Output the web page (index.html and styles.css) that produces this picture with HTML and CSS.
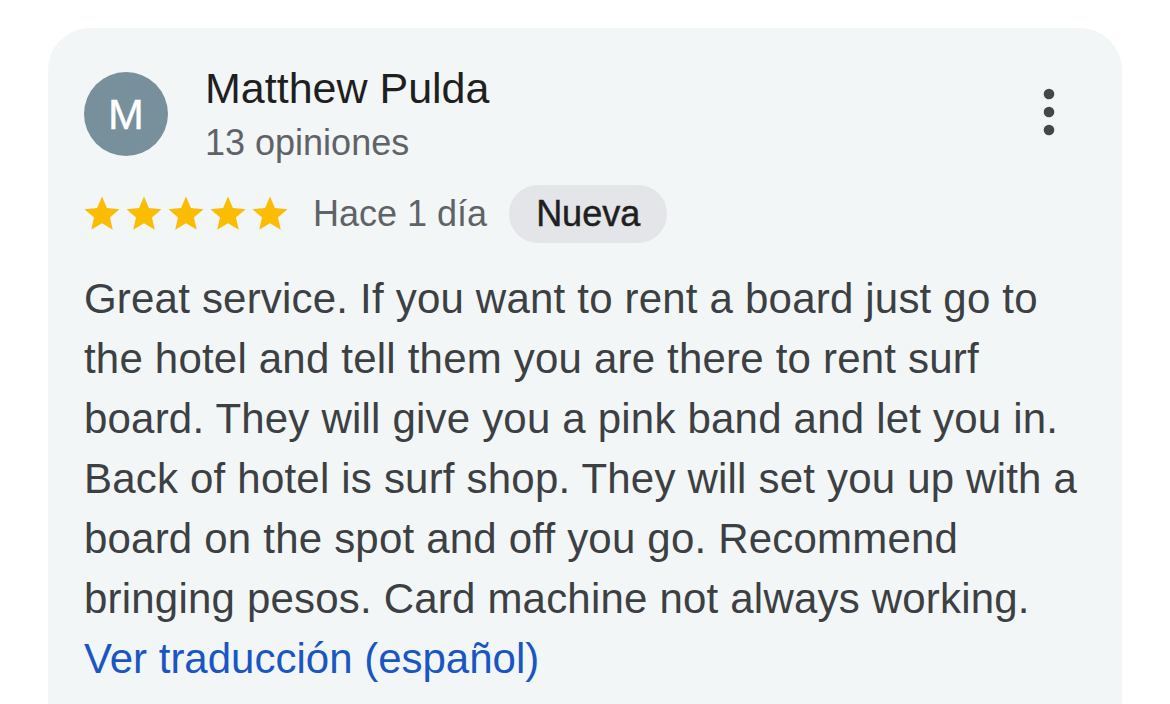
FILE: index.html
```html
<!DOCTYPE html>
<html lang="es">
<head>
<meta charset="utf-8">
<title>Reseña</title>
<link rel="stylesheet" href="styles.css">
</head>
<body>
<div class="card">
  <div class="header">
    <div class="avatar">M</div>
    <div class="who">
      <div class="name">Matthew Pulda</div>
      <div class="count">13 opiniones</div>
    </div>
    <button class="more" aria-label="Más opciones">
      <svg width="12" height="48" viewBox="0 0 12 48"><circle cx="6" cy="6" r="5.3" fill="#444746"/><circle cx="6" cy="24" r="5.3" fill="#444746"/><circle cx="6" cy="42" r="5.3" fill="#444746"/></svg>
    </button>
  </div>
  <div class="meta">
    <div class="stars">
      <svg class="star" viewBox="0 0 24 24"><path d="M12 17.27L18.18 21l-1.64-7.03L22 9.24l-7.19-.61L12 2 9.19 8.63 2 9.24l5.46 4.73L5.82 21z"/></svg>
      <svg class="star" viewBox="0 0 24 24"><path d="M12 17.27L18.18 21l-1.64-7.03L22 9.24l-7.19-.61L12 2 9.19 8.63 2 9.24l5.46 4.73L5.82 21z"/></svg>
      <svg class="star" viewBox="0 0 24 24"><path d="M12 17.27L18.18 21l-1.64-7.03L22 9.24l-7.19-.61L12 2 9.19 8.63 2 9.24l5.46 4.73L5.82 21z"/></svg>
      <svg class="star" viewBox="0 0 24 24"><path d="M12 17.27L18.18 21l-1.64-7.03L22 9.24l-7.19-.61L12 2 9.19 8.63 2 9.24l5.46 4.73L5.82 21z"/></svg>
      <svg class="star" viewBox="0 0 24 24"><path d="M12 17.27L18.18 21l-1.64-7.03L22 9.24l-7.19-.61L12 2 9.19 8.63 2 9.24l5.46 4.73L5.82 21z"/></svg>
    </div>
    <span class="date">Hace 1 día</span>
    <span class="chip">Nueva</span>
  </div>
  <p class="text">Great service. If you want to rent a board just go to the hotel and tell them you are there to rent surf board. They will give you a pink band and let you in. Back of hotel is surf shop. They will set you up with a board on the spot and off you go. Recommend bringing pesos. Card machine not always working.</p>
  <a class="translate" href="#">Ver traducción (español)</a>
</div>
</body>
</html>
```

FILE: styles.css
```css
html, body {
  margin: 0;
  padding: 0;
  background: #ffffff;
  overflow: hidden;
  height: 100%;
}

body {
  font-family: "Liberation Sans", Arial, sans-serif;
  padding: 28px 48px 0 48px;
  box-sizing: border-box;
}

.card {
  width: 1074px;
  min-height: 720px;
  box-sizing: border-box;
  background: #f2f6f7;
  border-radius: 42px 42px 0 0;
  padding: 35px 36px 40px 36px;
}

.header {
  display: flex;
  align-items: center;
  height: 102px;
}

.avatar {
  width: 84px;
  height: 84px;
  border-radius: 50%;
  background: #78909c;
  color: #ffffff;
  font-size: 43px;
  line-height: 84px;
  text-align: center;
  flex: none;
  -webkit-text-stroke: 0.4px #ffffff;
}

.who {
  flex: 1;
  margin-left: 37px;
  display: flex;
  flex-direction: column;
  gap: 8px;
}

.name {
  font-size: 43px;
  line-height: 50px;
  color: #1f1f1f;
}

.count {
  font-size: 36px;
  line-height: 44px;
  color: #5f6368;
}

.more {
  border: 0;
  background: transparent;
  padding: 0;
  width: 48px;
  height: 60px;
  display: flex;
  align-items: center;
  justify-content: center;
  margin-right: 13px;
  align-self: flex-start;
  margin-top: 19px;
}

.meta {
  display: flex;
  align-items: center;
  height: 58px;
  margin-top: 20px;
}

.stars {
  display: flex;
  margin-left: -3px;
}

.star {
  width: 42px;
  height: 42px;
  fill: #fbbc04;
  display: block;
}

.date {
  font-size: 36px;
  color: #5f6368;
  margin-left: 22px;
}

.chip {
  margin-left: 22px;
  height: 58px;
  line-height: 58px;
  padding: 0 27px;
  border-radius: 29px;
  background: #e3e5e8;
  color: #1f1f1f;
  font-size: 36px;
  -webkit-text-stroke: 0.5px #1f1f1f;
}

.text {
  margin: 26px 0 0 0;
  font-size: 42px;
  line-height: 60px;
  letter-spacing: 0.2px;
  color: #3c4043;
  max-width: 1002px;
}

.translate {
  display: block;
  font-size: 42px;
  line-height: 60px;
  color: #1a56c2;
  text-decoration: none;
}
```
